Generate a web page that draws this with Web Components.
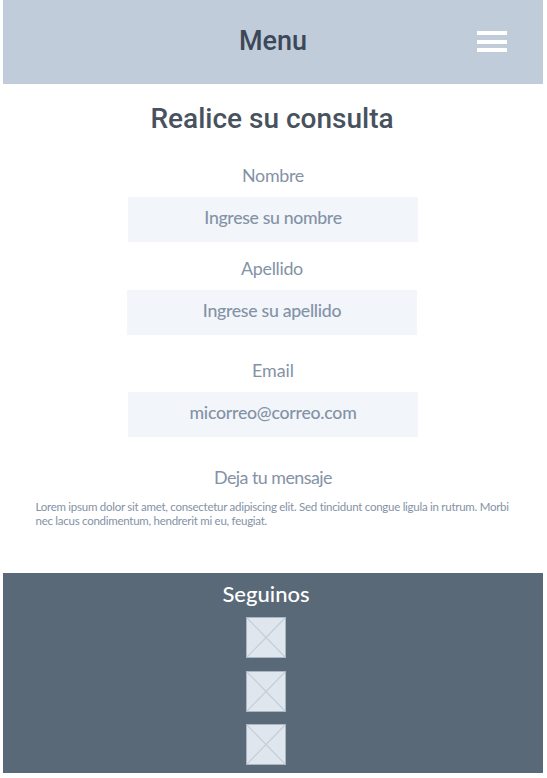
<!DOCTYPE html>
<html lang="es">
<head>
<meta charset="utf-8">
<title>Consulta</title>
<style>
body { margin: 0; background: #fff; }
</style>
</head>
<body>
<contact-page>
  <menu-bar slot="header">Menu</menu-bar>
  <page-title>Realice su consulta</page-title>
  <form-field label="Nombre" style="margin-top:28px">Ingrese su nombre</form-field>
  <form-field label="Apellido" style="margin-top:15px;margin-left:-1px;margin-right:1px;--text-gap:-.3px">Ingrese su apellido</form-field>
  <form-field label="Email" style="margin-top:24px;--label-gap:0px;--text-gap:-.25px">micorreo@correo.com</form-field>
  <message-block label="Deja tu mensaje">Lorem ipsum dolor sit amet, consectetur adipiscing elit. Sed tincidunt congue ligula in rutrum. Morbi nec lacus condimentum, hendrerit mi eu, feugiat.</message-block>
  <social-footer slot="footer" label="Seguinos">
    <image-placeholder></image-placeholder>
    <image-placeholder></image-placeholder>
    <image-placeholder></image-placeholder>
  </social-footer>
</contact-page>
<script>
const define = (name, html) => customElements.define(name, class extends HTMLElement {
  connectedCallback() {
    if (this.shadowRoot) return;
    const root = this.attachShadow({ mode: 'open' });
    root.innerHTML = html;
    const label = root.querySelector('.label');
    if (label) label.textContent = this.getAttribute('label');
  }
});

define('contact-page', `
<style>
:host { display: flex; flex-direction: column; box-sizing: border-box; width: 547px; height: 778px; padding: 0 4px 5px 3px; font-family: Lato, sans-serif; color: #8492a6; }
main { flex: 1; display: flex; flex-direction: column; align-items: center; }
</style>
<slot name="header"></slot><main><slot></slot></main><slot name="footer"></slot>`);

define('menu-bar', `
<style>
:host { display: grid; grid-template-columns: 1fr auto 1fr; align-items: center; height: 84px; background: #c0ccda; color: #3c4858; font: 500 27px/32px Roboto, sans-serif; }
span { grid-column: 2; padding-bottom: 3px; }
svg { justify-self: end; margin-right: 36px; display: block; }
</style>
<span><slot></slot></span>
<svg width="30" height="22" viewBox="0 0 30 22" fill="#fff" shape-rendering="crispEdges"><path d="M0 0h30v4H0zM0 9h30v4H0zM0 17h30v4H0z"/></svg>`);

define('page-title', `
<style>:host { display: block; margin-top: 18px; padding-right: 2px; color: #47525e; font: 500 28px/34px Roboto, sans-serif; }</style>
<slot></slot>`);

define('form-field', `
<style>
:host { display: flex; flex-direction: column; align-items: center; width: 290px; }
.label { font-size: 17.9px; line-height: 22px; letter-spacing: var(--label-gap, -.33px); }
.input { width: 100%; height: 45px; box-sizing: border-box; margin-top: 11px; padding-bottom: 3px; display: flex; align-items: center; justify-content: center; background: #f2f6fb; font-size: 17.7px; line-height: 22px; letter-spacing: var(--text-gap, -.34px); font-weight: 500; }
</style>
<div class="label"></div><div class="input"><span><slot></slot></span></div>`);

define('message-block', `
<style>
:host { display: flex; flex-direction: column; align-items: center; width: 475px; margin-top: 29px; }
.label { font-size: 17.9px; line-height: 22px; letter-spacing: -.55px; }
p { margin: 12px 0 0; width: 100%; font-size: 11.5px; line-height: 14px; letter-spacing: -.265px; }
</style>
<div class="label"></div><p><slot></slot></p>`);

define('social-footer', `
<style>
:host { display: flex; flex-direction: column; align-items: center; box-sizing: border-box; height: 200px; padding: 7px 14px 0 0; background: #5a6978; }
.label { color: #fff; font-size: 22px; line-height: 28px; font-weight: 500; }
.items { display: flex; flex-direction: column; gap: 12.5px; margin-top: 9px; }
</style>
<div class="label"></div><div class="items"><slot></slot></div>`);

define('image-placeholder', `
<style>:host { display: block; width: 40px; height: 41px; } svg { display: block; }</style>
<svg width="40" height="41" viewBox="0 0 40 41"><rect x=".5" y=".5" width="39" height="40" fill="#e0e6ed" stroke="#aab6c3"/><path d="M1 1L39 40M39 1L1 40" stroke="#c4cedb" stroke-width="1.2"/></svg>`);
</script>
</body>
</html>
